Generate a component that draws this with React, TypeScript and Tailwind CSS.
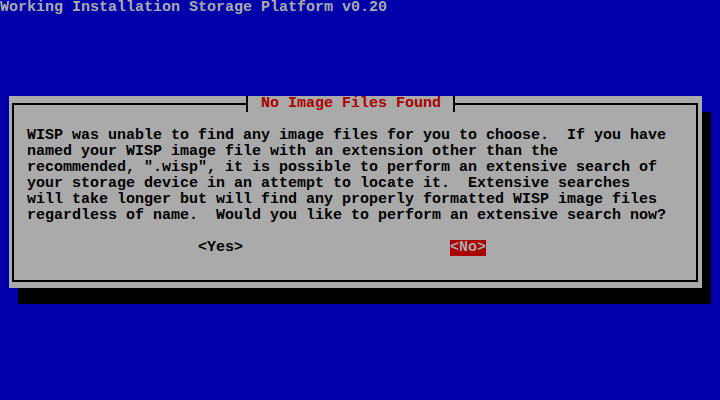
const lines = [
  "WISP was unable to find any image files for you to choose.  If you have",
  "named your WISP image file with an extension other than the",
  'recommended, ".wisp", it is possible to perform an extensive search of',
  "your storage device in an attempt to locate it.  Extensive searches",
  "will take longer but will find any properly formatted WISP image files",
  "regardless of name.  Would you like to perform an extensive search now?",
];

const App = () => {
  return (
    <div className="w-[720px] h-[400px] overflow-hidden bg-[#0000aa] font-['Liberation_Mono',monospace] text-[15px] leading-[16px] font-bold">
      <div className="h-4 whitespace-pre text-[#aaaaaa]">
        Working Installation Storage Platform v0.20
      </div>

      {/* dialog window with its shadow */}
      <div className="mt-20 ml-[9px] flex w-[693px] h-[192px] bg-[#aaaaaa] pt-[7px] pl-[3px] pr-[4px] pb-[6px] shadow-[9px_16px_0_0_#000]">
        <div className="relative flex-1 border-2 border-black pt-[23px] pl-[13px] text-black">
          <div className="absolute top-[-9px] left-[232px] h-4 border-x-2 border-black bg-[#aaaaaa] pl-[13px] pr-[12px] whitespace-pre text-[#aa0000]">
            No Image Files Found
          </div>

          {lines.map((line, i) => (
            <div key={i} className="h-4 whitespace-pre">
              {line}
            </div>
          ))}

          <div className="mt-4 flex h-4 whitespace-pre">
            <span className="ml-[171px]">&lt;Yes&gt;</span>
            <span className="ml-[207px] bg-[#aa0000] text-[#aaaaaa]">&lt;No&gt;</span>
          </div>
        </div>
      </div>
    </div>
  );
};

export default App;
